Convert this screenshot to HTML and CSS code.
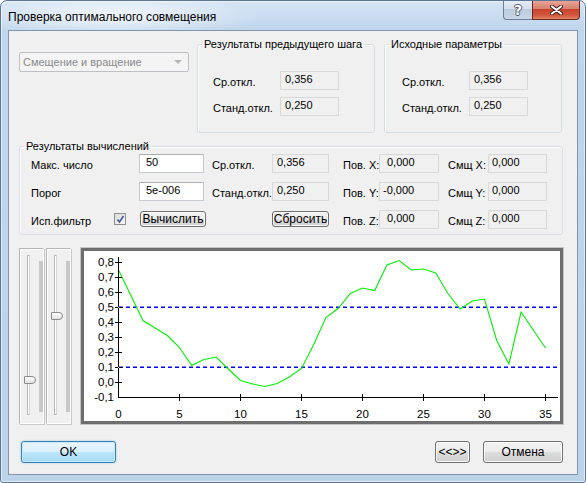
FILE: index.html
```html
<!DOCTYPE html>
<html lang="ru">
<head>
    <meta charset="UTF-8">
    <title>Проверка оптимального совмещения</title>
    <link rel="stylesheet" href="styles.css">
</head>
<body>
    <div class="window">
        <div class="titlebar">
            <span class="title">Проверка оптимального совмещения</span>
            <div class="caption-btns">
                <button class="cap-btn help">?</button>
                <button class="cap-btn close">
                    <svg width="13" height="10" viewBox="0 0 13 10">
                        <path d="M2 1.5 L11 8.5 M11 1.5 L2 8.5" stroke="#3b1d18" stroke-width="4" stroke-linecap="round"/>
                        <path d="M2 1.5 L11 8.5 M11 1.5 L2 8.5" stroke="#fff" stroke-width="2.2" stroke-linecap="round"/>
                    </svg>
                </button>
            </div>
        </div>

        <div class="client">
            <div class="top-row">
                <div class="combo">
                    <span>Смещение и вращение</span>
                    <span class="combo-arrow"></span>
                </div>
                <fieldset class="group prev">
                    <legend>Результаты предыдущего шага</legend>
                    <div class="pair-grid">
                        <span class="lbl">Ср.откл.</span><span class="ro">0,356</span>
                        <span class="lbl">Станд.откл.</span><span class="ro">0,250</span>
                    </div>
                </fieldset>
                <fieldset class="group src">
                    <legend>Исходные параметры</legend>
                    <div class="pair-grid">
                        <span class="lbl">Ср.откл.</span><span class="ro">0,356</span>
                        <span class="lbl">Станд.откл.</span><span class="ro">0,250</span>
                    </div>
                </fieldset>
            </div>

            <fieldset class="group calc">
                <legend>Результаты вычислений</legend>
                <div class="calc-grid">
                    <span class="lbl">Макс. число</span>
                    <span class="edit">50</span>
                    <span class="lbl clip">Ср.откл.</span>
                    <span class="ro short">0,356</span>
                    <span class="lbl">Пов. X:</span>
                    <span class="ro pov">0,000</span>
                    <span class="lbl">Смщ X:</span>
                    <span class="ro smsh">0,000</span>

                    <span class="lbl">Порог</span>
                    <span class="edit">5e-006</span>
                    <span class="lbl clip">Станд.откл.</span>
                    <span class="ro short">0,250</span>
                    <span class="lbl">Пов. Y:</span>
                    <span class="ro pov neg">-0,000</span>
                    <span class="lbl">Смщ Y:</span>
                    <span class="ro smsh">0,000</span>

                    <span class="lbl check-cell">Исп.фильтр
                        <span class="checkbox">
                            <svg width="9" height="9" viewBox="0 0 9 9"><path d="M1.5 4.5 L3.5 7 L7.5 1" fill="none" stroke="#3d5a96" stroke-width="1.6"/></svg>
                        </span>
                    </span>
                    <button class="btn small calc-btn">Вычислить</button>
                    <span></span>
                    <button class="btn small reset-btn">Сбросить</button>
                    <span class="lbl">Пов. Z:</span>
                    <span class="ro pov">0,000</span>
                    <span class="lbl">Смщ Z:</span>
                    <span class="ro smsh">0,000</span>
                </div>
            </fieldset>

            <div class="plot-row">
                <div class="slider">
                    <span class="groove"></span>
                    <span class="rail"></span>
                    <span class="thumb" style="top: 127px"></span>
                </div>
                <div class="slider">
                    <span class="groove"></span>
                    <span class="rail"></span>
                    <span class="thumb" style="top: 63px"></span>
                </div>
                <div class="chart">
                    <svg class="plot" viewBox="84 252 476 170" width="476" height="170">
                        <path class="limit" d="M119 308.3 H558 M119 368.3 H558"/>
                        <polyline class="curve"
                            points="118.5,271 130.7,296 142.9,321.5 155.1,329 167.3,336.5 179.5,348.5 191.7,366.5 203.9,360.5 216.1,358 228.3,370 240.5,381.5 252.7,385 264.9,387.5 277.1,384.5 289.3,378 301.5,369.5 313.7,345.5 325.9,318.5 338.1,309.5 350.3,294.5 362.5,289 374.7,291.5 386.9,266 399.1,261.5 411.3,271 423.5,270 435.7,274 447.9,294.5 460.1,310 472.3,302 484.5,300 496.7,341.5 508.9,365 521.1,313 533.3,331 545.5,349"/>
                        <g class="axis">
                            <line x1="118.5" y1="258" x2="118.5" y2="399"/>
                            <line x1="118" y1="398.5" x2="558" y2="398.5"/>
                            <line x1="115" y1="263.5" x2="122" y2="263.5"/>
                            <line x1="115" y1="278.5" x2="122" y2="278.5"/>
                            <line x1="115" y1="293.5" x2="122" y2="293.5"/>
                            <line x1="115" y1="308.5" x2="122" y2="308.5"/>
                            <line x1="115" y1="323.5" x2="122" y2="323.5"/>
                            <line x1="115" y1="338.5" x2="122" y2="338.5"/>
                            <line x1="115" y1="353.5" x2="122" y2="353.5"/>
                            <line x1="115" y1="368.5" x2="122" y2="368.5"/>
                            <line x1="115" y1="383.5" x2="122" y2="383.5"/>
                            <line x1="179.5" y1="395" x2="179.5" y2="402"/>
                            <line x1="240.5" y1="395" x2="240.5" y2="402"/>
                            <line x1="301.5" y1="395" x2="301.5" y2="402"/>
                            <line x1="362.5" y1="395" x2="362.5" y2="402"/>
                            <line x1="423.5" y1="395" x2="423.5" y2="402"/>
                            <line x1="484.5" y1="395" x2="484.5" y2="402"/>
                            <line x1="545.5" y1="395" x2="545.5" y2="402"/>
                        </g>
                        <g fill="#ffff00">
                            <rect x="118" y="308" width="1" height="1"/>
                            <rect x="118" y="368" width="1" height="1"/>
                        </g>
                        <g class="axis-text" text-anchor="end">
                            <text x="114" y="267">0,8</text>
                            <text x="114" y="282">0,7</text>
                            <text x="114" y="297">0,6</text>
                            <text x="114" y="312">0,5</text>
                            <text x="114" y="327">0,4</text>
                            <text x="114" y="342">0,3</text>
                            <text x="114" y="357">0,2</text>
                            <text x="114" y="372">0,1</text>
                            <text x="114" y="387">0,0</text>
                            <text x="114" y="402">-0,1</text>
                        </g>
                        <g class="axis-text" text-anchor="middle">
                            <text x="118.5" y="419">0</text>
                            <text x="179.5" y="419">5</text>
                            <text x="240.5" y="419">10</text>
                            <text x="301.5" y="419">15</text>
                            <text x="362.5" y="419">20</text>
                            <text x="423.5" y="419">25</text>
                            <text x="484.5" y="419">30</text>
                            <text x="545.5" y="419">35</text>
                        </g>
                    </svg>
                </div>
            </div>

            <div class="btn-row">
                <button class="btn default ok-btn">OK</button>
                <span class="spacer"></span>
                <button class="btn swap-btn">&lt;&lt;&gt;&gt;</button>
                <button class="btn cancel-btn">Отмена</button>
            </div>
        </div>
    </div>
</body>
</html>
```

FILE: styles.css
```css
body {
    margin: 0;
    font-family: "Liberation Sans", Arial, sans-serif;
    font-size: 11px;
    color: #000;
    background: #ffffff;
}
.window {
    width: 586px;
    height: 483px;
    box-sizing: border-box;
    border: 1px solid #5b7697;
    border-radius: 7px 7px 3px 3px;
    background:
        radial-gradient(ellipse 150px 22px at 110px 15px, rgba(255, 255, 255, 0.75), rgba(255, 255, 255, 0) 100%),
        linear-gradient(#d6e5f5, #c0d6ed 28px, #bcd3ea 100%);
    box-shadow: inset 0 0 0 1px rgba(255, 255, 255, 0.55);
    overflow: hidden;
}
.titlebar {
    height: 29px;
    display: flex;
    justify-content: space-between;
    align-items: flex-start;
    padding-left: 7px;
}
.title {
    margin-top: 9px;
    line-height: 14px;
    font-size: 12px;
}
.caption-btns {
    display: flex;
    margin-top: -1px;
    margin-right: 5px;
}
.cap-btn {
    height: 20px;
    padding: 0;
    border: 1px solid #6b7f99;
    border-top: none;
    display: flex;
    align-items: center;
    justify-content: center;
}
.help {
    width: 29px;
    border-radius: 0 0 0 4px;
    border-right: none;
    background: linear-gradient(#e8eff7, #d3dfec 45%, #bccbde 50%, #c9d7e7 100%);
    color: #fff;
    font-weight: bold;
    font-size: 14px;
    font-family: "DejaVu Sans", sans-serif;
    text-shadow: 1px 0 #4c5a6c, -1px 0 #4c5a6c, 0 1px #4c5a6c, 0 -1px #4c5a6c;
}
.close {
    width: 48px;
    border-color: #6c2b22;
    border-radius: 0 0 4px 0;
    background: linear-gradient(#e9a99b, #d98270 45%, #c8442f 50%, #d0583f 80%, #e4846a 100%);
}
.client {
    margin: 0 7px;
    height: 445px;
    box-sizing: border-box;
    border: 1px solid #8195ad;
    background: #f0f0f0;
    padding: 0 14px 0 10px;
}
.top-row {
    display: flex;
    align-items: flex-start;
    margin-top: 6px;
}
.combo {
    width: 170px;
    height: 20px;
    margin-top: 15px;
    margin-right: 8px;
    box-sizing: border-box;
    border: 1px solid #bdc0c4;
    border-radius: 2px;
    background: #f4f4f4;
    color: #8a8a8a;
    display: flex;
    align-items: center;
    justify-content: space-between;
    padding: 0 6px 0 3px;
}
.combo-arrow {
    width: 0;
    height: 0;
    border-left: 4px solid transparent;
    border-right: 4px solid transparent;
    border-top: 4px solid #b4b4b4;
}
.group {
    margin: 0;
    padding: 0;
    min-width: 0;
    border: 1px solid #d5dfe5;
    border-radius: 3px;
    box-shadow: inset 1px 1px 0 #fff;
}
.group legend {
    margin-left: 4px;
    padding: 0 2px;
    line-height: 14px;
    white-space: nowrap;
}
.prev, .src {
    width: 178px;
    box-sizing: border-box;
}
.src {
    margin-left: 9px;
}
.pair-grid {
    display: grid;
    grid-template-columns: 67px 59px;
    grid-auto-rows: 19px;
    row-gap: 7px;
    padding: 20px 0 16px 15px;
}
.src .pair-grid {
    padding-left: 17px;
}
.lbl {
    padding-top: 4px;
    line-height: 14px;
    white-space: nowrap;
}
.ro, .edit {
    box-sizing: border-box;
    height: 19px;
    line-height: 15px;
    padding-left: 4px;
    white-space: nowrap;
}
.ro {
    border: 1px solid #d9d9d9;
    background: #f0f0f0;
}
.edit {
    width: 65px;
    border: 1px solid #c5cad0;
    border-top-color: #abadb3;
    background: #fff;
    padding-left: 6px;
}
.calc {
    margin-top: 6px;
}
.calc-grid {
    display: grid;
    grid-template-columns: 108px 72px 61px 71px 36px 69px 40px 59px;
    grid-auto-rows: 19px;
    row-gap: 9px;
    padding: 1px 0 5px 11px;
}
.clip {
    overflow: hidden;
    padding-left: 1px;
}
.short {
    width: 57px;
}
.pov {
    width: 60px;
    padding-left: 7px;
}
.pov.neg {
    padding-left: 3px;
}
.smsh {
    width: 59px;
    padding-left: 3px;
}
.check-cell {
    display: flex;
    align-items: flex-start;
}
.checkbox {
    width: 12px;
    height: 12px;
    box-sizing: border-box;
    margin: -1px 13px 0 auto;
    border: 1px solid #8f9090;
    background: linear-gradient(135deg, #dcdcdc, #f6f6f6);
    display: flex;
    align-items: center;
    justify-content: center;
}
.btn {
    font: inherit;
    color: #000;
    padding: 0;
    border: 1px solid #707070;
    border-radius: 3px;
    background: linear-gradient(#f2f2f2 0%, #ebebeb 50%, #dddddd 50%, #cfcfcf 100%);
    box-shadow: inset 0 0 0 1px #fbfbfb;
}
.btn.small {
    height: 16px;
    line-height: 13px;
    margin-top: 1px;
    font-size: 12px;
}
.calc-btn {
    width: 66px;
    margin-left: 1px;
}
.reset-btn {
    width: 57px;
}
.plot-row {
    display: flex;
    margin-top: 13px;
    height: 176px;
}
.slider {
    position: relative;
    width: 25px;
    height: 176px;
    box-sizing: border-box;
    border: 1px solid #b5b5b5;
    border-right-color: #fdfdfd;
    border-bottom-color: #fdfdfd;
    box-shadow: inset 1px 1px 0 #fdfdfd, 1px 1px 0 #c9c9c9;
    margin-right: 2px;
}
.groove {
    position: absolute;
    left: 7px;
    top: 6px;
    width: 3px;
    height: 160px;
    box-sizing: border-box;
    border: 1px solid #b8b8b8;
    border-right-color: #d6d6d6;
    background: #fff;
}
.rail {
    position: absolute;
    left: 19px;
    top: 12px;
    width: 4px;
    height: 151px;
    background: #c8c8c8;
}
.thumb {
    position: absolute;
    left: 4px;
    width: 12px;
    height: 8px;
    box-sizing: border-box;
    border: 1px solid #8a8a8a;
    border-radius: 1px 4px 4px 1px;
    background: linear-gradient(#fdfdfd, #e2e2e2);
}
.chart {
    width: 482px;
    height: 176px;
    box-sizing: border-box;
    margin-left: 8px;
    border: 3px solid #6e6e6e;
    box-shadow: 0 0 0 1px #c4c4c4;
    background: #fff;
}
.plot {
    display: block;
}
.limit {
    fill: none;
    stroke: #0000ff;
    stroke-width: 1.4;
    stroke-dasharray: 4 3;
}
.curve {
    fill: none;
    stroke: #00f000;
    stroke-width: 1.1;
}
.axis line {
    stroke: #000;
    stroke-width: 1;
    shape-rendering: crispEdges;
}
.axis-text {
    font-family: "Liberation Sans", Arial, sans-serif;
    font-size: 11.5px;
    fill: #000;
}
.btn-row {
    display: flex;
    margin-top: 17px;
    padding-left: 2px;
}
.btn-row .btn {
    height: 22px;
    font-size: 12px;
}
.ok-btn {
    width: 95px;
}
.btn.default {
    border-color: #3c7fb1;
    background: linear-gradient(#eaf6fd 0%, #d9f0fc 50%, #bee6fd 50%, #a7d9f5 100%);
    box-shadow: inset 0 0 0 1px #c5eafc, 0 0 2px #7ec4ee;
}
.spacer {
    flex: 1;
}
.swap-btn {
    width: 35px;
    margin-right: 13px;
}
.cancel-btn {
    width: 80px;
}
```
